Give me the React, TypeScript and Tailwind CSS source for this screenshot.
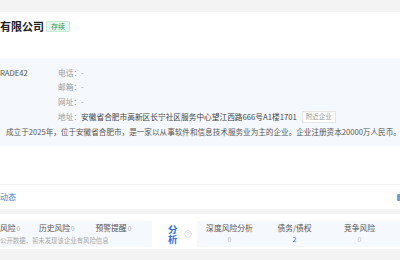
import React from 'react';
import { CircleHelp } from 'lucide-react';

const infoRows = [
  { label: '电话', value: '-' },
  { label: '邮箱', value: '-' },
  { label: '网址', value: '-' },
];

const riskItems = [
  { name: '风险', count: 0 },
  { name: '历史风险', count: 0 },
  { name: '预警提醒', count: 0 },
];

const analysisItems = [
  { name: '深度风险分析', count: 0, active: false },
  { name: '债务/债权', count: 2, active: true },
  { name: '竞争风险', count: 0, active: false },
];

export default function App() {
  return (
    <div className="w-[400px] h-[260px] overflow-hidden bg-[#f3f3f4] pt-[12px] font-['Noto_Sans_CJK_SC','Noto_Sans',sans-serif]">
      <div className="bg-white">
        {/* header */}
        <div className="h-[46px]">
          <div className="h-[28px] flex items-center gap-[2px]">
            <h1 className="text-[11px] font-bold text-[#222] leading-none">有限公司</h1>
            <span className="h-[11px] px-[4px] flex items-center text-[7px] text-[#2b9d5c] bg-[#eaf7ee] border border-[#c4e8d0] rounded-[1px]">
              存续
            </span>
          </div>
        </div>

        {/* base info */}
        <div className="h-[88px] bg-[#f5f8fc] pt-[7px] text-[7.7px]">
          <div className="flex">
            <div className="w-[58px] h-[14.75px] flex items-center text-[#555]">RADE42</div>
            <div className="flex flex-col">
              {infoRows.map((r) => (
                <div key={r.label} className="h-[14.75px] flex items-center text-[#999]">
                  {r.label}：{r.value}
                </div>
              ))}
              <div className="h-[14.75px] flex items-center">
                <span className="text-[#999]">地址：</span>
                <span className="text-[#444]">安徽省合肥市高新区长宁社区服务中心望江西路666号A1楼1701</span>
                <span className="ml-[5px] h-[12px] px-[3px] flex items-center text-[6.5px] text-[#999] bg-white border border-[#e6e6e6]">
                  附近企业
                </span>
              </div>
            </div>
          </div>
          <div className="h-[14.75px] flex items-center pl-[6px] text-[7.6px] text-[#555] whitespace-nowrap">
            成立于2025年，位于安徽省合肥市，是一家以从事软件和信息技术服务业为主的企业。企业注册资本20000万人民币。
          </div>
        </div>

        <div className="h-[39px] border-b border-[#f0f0f0]" />

        <div className="h-[24px] flex items-center justify-between">
          <span className="text-[8px] text-[#3a7fd0]">动态</span>
          <span className="w-[6px] h-[7px] -mr-[3px] bg-[#6aa3e0] rounded-[1px]" />
        </div>
      </div>

      <div className="h-[5px]" />

      {/* risk strip */}
      <div className="bg-white pt-[7px] pb-[2px] flex items-stretch">
        <div className="w-[152px] h-[26px] bg-[#f5f8fc] pt-[2px]">
          <div className="h-[10px] flex items-center">
            {riskItems.map((r, i) => (
              <div key={r.name} className={`${i === 0 ? 'w-[42px]' : 'w-[61px]'} flex items-baseline gap-[1px]`}>
                <span className="text-[7.8px] text-[#555]">{r.name}</span>
                <span className="text-[6.5px] text-[#aaa]">{r.count}</span>
              </div>
            ))}
          </div>
          <div className="mt-[3px] h-[10px] flex items-center text-[6.4px] text-[#aaa] whitespace-nowrap">
            公开数据，暂未发现该企业有风险信息
          </div>
        </div>

        <div className="w-[45px] flex items-center pl-[16px] gap-[6px]">
          <span className="block w-[10px] text-[9.5px] leading-[10.5px] font-bold text-[#2a6fdb] break-all">
            分析
          </span>
          <CircleHelp className="w-[8px] h-[8px] text-[#c0c0c0]" strokeWidth={1.5} />
        </div>

        <div className="flex-1 h-[26px] bg-[#f5f8fc] flex">
          {analysisItems.map((a) => (
            <div key={a.name} className="w-[65px] flex flex-col items-center pt-[2px]">
              <span className="h-[10px] flex items-center text-[7.8px] text-[#555]">{a.name}</span>
              <span className={`mt-[1px] h-[10px] flex items-center text-[7px] ${a.active ? 'text-[#2a6fdb]' : 'text-[#bbb]'}`}>
                {a.count}
              </span>
            </div>
          ))}
        </div>
      </div>
    </div>
  );
}
